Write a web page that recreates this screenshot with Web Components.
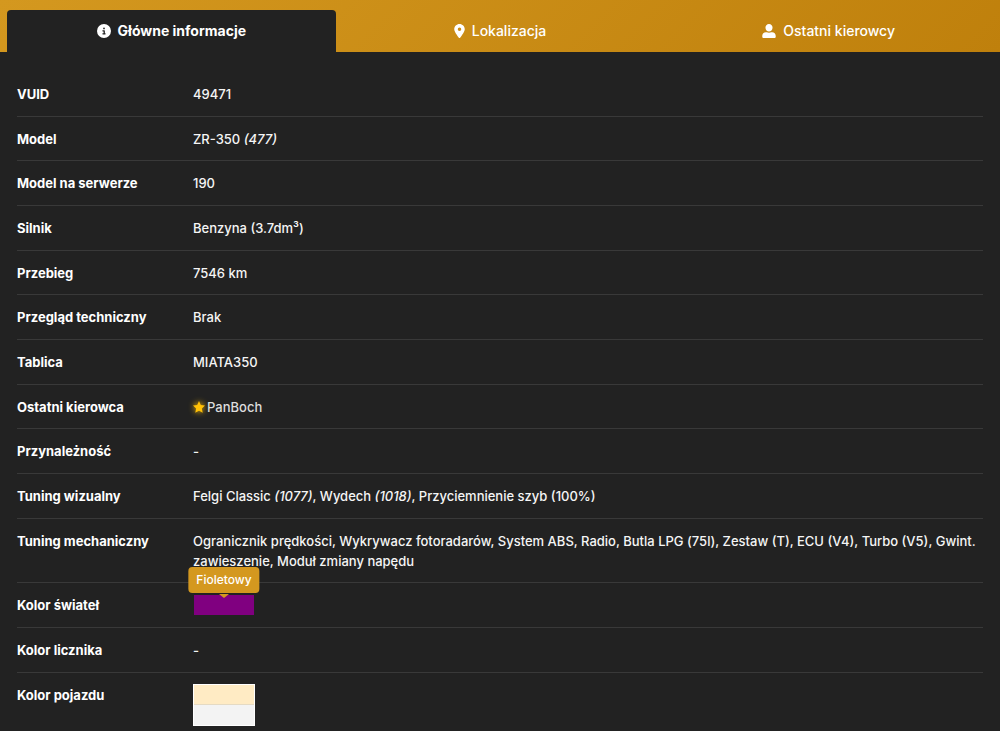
<!DOCTYPE html>
<html lang="pl">
<head>
<meta charset="utf-8">
<meta name="viewport" content="width=device-width, initial-scale=1">
<title>Pojazd 49471</title>
<style>
  html { background: #222; }
  body { margin: 0; background: #222; color: #f5f5f5; font: 14px/20px Inter, "Liberation Sans", sans-serif; }
</style>
</head>
<body>
<vehicle-tabs>
  <vehicle-tab icon="info" active>Główne informacje</vehicle-tab>
  <vehicle-tab icon="pin">Lokalizacja</vehicle-tab>
  <vehicle-tab icon="user">Ostatni kierowcy</vehicle-tab>
</vehicle-tabs>
<vehicle-details></vehicle-details>

<script>
const icons = {
  info: '<svg width="14" height="14" viewBox="0 0 512 512"><path fill="currentColor" d="M256 512A256 256 0 1 0 256 0a256 256 0 1 0 0 512zM216 336h24v-64h-24c-13.300 0-24-10.700-24-24s10.700-24 24-24h48c13.300 0 24 10.700 24 24v88h8c13.300 0 24 10.700 24 24s-10.700 24-24 24h-80c-13.300 0-24-10.700-24-24s10.700-24 24-24zm40-208a32 32 0 1 1 0 64 32 32 0 1 1 0-64z"/></svg>',
  pin: '<svg width="11" height="14" viewBox="0 0 384 512"><path fill="currentColor" d="M215.700 499.200C267 435 384 279.400 384 192 384 86 298 0 192 0S0 86 0 192c0 87.400 117 243 168.300 307.200 12.300 15.300 35.100 15.300 47.400 0zM192 128a64 64 0 1 1 0 128 64 64 0 1 1 0-128z"/></svg>',
  user: '<svg width="14" height="14" viewBox="0 0 512 512"><path fill="currentColor" d="M256 0a128 128 0 0 1 128 144c0 70-57 128-128 128S128 214 128 144A128 128 0 0 1 256 0zM144 300h30c52 24 112 24 164 0h30c80 0 134 60 134 136v28c0 26-22 48-48 48H58c-26 0-48-22-48-48v-28c0-76 54-136 134-136z"/></svg>'
};

function define(name, html, setup) {
  const template = document.createElement('template');
  template.innerHTML = html;
  customElements.define(name, class extends HTMLElement {
    constructor() {
      super();
      this.attachShadow({ mode: 'open' }).append(template.content.cloneNode(true));
    }
    connectedCallback() { if (setup) setup(this, this.shadowRoot); }
  });
}

define('vehicle-tabs', `
  <style>
    :host { display: block; background: linear-gradient(135deg, #d4981f, #bf800c); }
    nav { display: grid; grid-template-columns: repeat(3, 1fr); padding: 10px 7px 0; }
  </style>
  <nav aria-label="Informacje o pojeździe"><slot></slot></nav>`);

define('vehicle-tab', `
  <style>
    :host { display: block; }
    button { display: flex; align-items: center; justify-content: center; gap: 7px; width: 100%; height: 42px;
      margin: 0; padding: 0; border: 0; border-radius: 4px 4px 0 0; background: none; color: #fff;
      font: inherit; font-weight: 500; cursor: pointer; }
    :host([active]) button { background: #222; font-weight: 700; }
    .icon { display: flex; }
  </style>
  <button type="button"><span class="icon" aria-hidden="true"></span><span><slot></slot></span></button>`,
  (host, root) => {
    root.querySelector('.icon').innerHTML = icons[host.getAttribute('icon')];
    if (host.hasAttribute('active')) root.querySelector('button').setAttribute('aria-current', 'page');
  });

define('driver-link', `
  <style>
    :host { display: flex; }
    a { display: flex; align-items: center; gap: 2px; color: #ddd; text-decoration: none; }
    svg { filter: drop-shadow(0 0 3px #ffc107); }
  </style>
  <a href="#kierowca"><svg width="12" height="12" viewBox="0 0 24 24" aria-hidden="true"><path fill="#ffc107" d="M12 0l3.600 8 8.400 1-6.200 6 1.600 8.500L12 19.300 4.600 23.500 6.200 15 0 9l8.400-1z"/></svg><slot></slot></a>`);

define('color-swatch', `
  <style>
    :host { display: block; position: relative; width: 60px; height: 20px; margin-left: 1px; background: var(--swatch); }
    .tip { position: absolute; bottom: calc(100% + 2px); left: 50%; transform: translateX(-50%); box-sizing: border-box;
      height: 26px; padding: 3px 8px; border-radius: 4px; background: #d4981f; color: #fff; font-size: 12px; line-height: 20px; }
    .arrow { position: absolute; top: -1px; left: 50%; margin-left: -5px; border: solid transparent; border-width: 4px 5px 0; border-top-color: #d4981f; }
    [hidden] { display: none; }
  </style>
  <span class="tip" role="tooltip"><slot></slot></span><span class="arrow"></span>`,
  (host, root) => {
    host.style.setProperty('--swatch', host.getAttribute('color'));
    root.querySelectorAll('span').forEach(part => part.hidden = !host.textContent.trim());
  });

define('color-stack', `
  <style>
    :host { display: flex; flex-direction: column; box-sizing: border-box; width: 62px; border: 1px solid #fff; }
    ::slotted(color-swatch) { margin: 0; }
    ::slotted(color-swatch:first-child) { box-shadow: inset 0 -1px #e5dac3; }
  </style><slot></slot>`);

define('vehicle-details', `
  <style>
    :host { display: block; padding: 20px 17px 0; font-size: 13px; font-weight: 500; }
    table { width: 100%; border-collapse: separate; border-spacing: 0; table-layout: fixed; }
    th, td { padding: 12px 0; border-bottom: 1px solid #393939; text-align: left; vertical-align: top; }
    tr:nth-child(3n + 2) > * { padding-bottom: 11px; }
    tr:last-child > * { padding-bottom: 0; border-bottom: 0; }
    tr:last-child > td { padding-top: 11px; }
    th { width: 176px; font-weight: 700; color: #fff; }
  </style>
  <table><tbody>
    <tr><th scope="row">VUID</th><td>49471</td></tr>
    <tr><th scope="row">Model</th><td>ZR-350 <i>(477)</i></td></tr>
    <tr><th scope="row">Model na serwerze</th><td>190</td></tr>
    <tr><th scope="row">Silnik</th><td>Benzyna (3.7dm³)</td></tr>
    <tr><th scope="row">Przebieg</th><td>7546 km</td></tr>
    <tr><th scope="row">Przegląd techniczny</th><td>Brak</td></tr>
    <tr><th scope="row">Tablica</th><td>MIATA350</td></tr>
    <tr><th scope="row">Ostatni kierowca</th><td><driver-link>PanBoch</driver-link></td></tr>
    <tr><th scope="row">Przynależność</th><td>-</td></tr>
    <tr><th scope="row">Tuning wizualny</th><td>Felgi Classic <i>(1077)</i>, Wydech <i>(1018)</i>, Przyciemnienie szyb (100%)</td></tr>
    <tr><th scope="row">Tuning mechaniczny</th><td>Ogranicznik prędkości, Wykrywacz fotoradarów, System ABS, Radio, Butla LPG (75l), Zestaw (T), ECU (V4), Turbo (V5), Gwint. zawieszenie, Moduł zmiany napędu</td></tr>
    <tr><th scope="row">Kolor świateł</th><td><color-swatch color="#800080">Fioletowy</color-swatch></td></tr>
    <tr><th scope="row">Kolor licznika</th><td>-</td></tr>
    <tr><th scope="row">Kolor pojazdu</th><td><color-stack><color-swatch color="#ffebc4"></color-swatch><color-swatch color="#f3f3f3"></color-swatch></color-stack></td></tr>
  </tbody></table>`);
</script>
</body>
</html>
